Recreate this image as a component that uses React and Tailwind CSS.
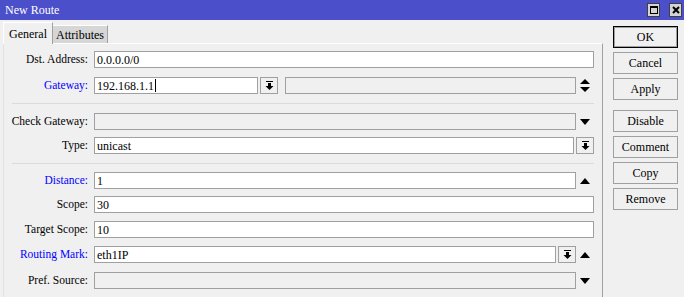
import React from "react";

const serif = { fontFamily: '"Liberation Serif", "Times New Roman", serif' };

function DropIcon() {
  return (
    <svg width="9" height="9" viewBox="0 0 9 9">
      <rect x="1" y="0" width="7" height="1" fill="#000" />
      <rect x="3" y="2" width="3" height="3" fill="#000" />
      <polygon points="0.5,5 8.5,5 4.5,9" fill="#000" />
    </svg>
  );
}

function Arrow({ dir }) {
  if (dir === "both") {
    return (
      <svg width="10" height="13" viewBox="0 0 10 13">
        <polygon points="5,0 10,5 0,5" fill="#000" />
        <polygon points="0,8 10,8 5,13" fill="#000" />
      </svg>
    );
  }
  return (
    <svg width="10" height="6" viewBox="0 0 10 6">
      {dir === "up" ? (
        <polygon points="5,0 10,6 0,6" fill="#000" />
      ) : (
        <polygon points="0,0 10,0 5,6" fill="#000" />
      )}
    </svg>
  );
}

function Field({ value, disabled, caret }) {
  return (
    <div
      className={`h-[17px] flex-1 border border-[#a0a0a0] flex items-center pl-[2px] text-[12px] leading-none text-black ${
        disabled ? "bg-[#f0f0f0]" : "bg-white"
      }`}
    >
      {value}
      {caret && <span className="inline-block w-[1px] h-[13px] bg-black ml-[1px]" />}
    </div>
  );
}

function DropBtn() {
  return (
    <div className="h-[17px] w-[18px] ml-[2px] border border-[#a0a0a0] bg-[#f0f0f0] flex items-center justify-center">
      <DropIcon />
    </div>
  );
}

function Row({ label, blue, mt, children }) {
  return (
    <div className={`flex items-center h-[17px] pr-[8px] ${mt}`}>
      <div
        className={`w-[84px] text-right text-[11.5px] leading-none ${blue ? "text-[#0000ff]" : "text-black"}`}
      >
        {label}
      </div>
      <div className="flex flex-1 items-center ml-[6px]">{children}</div>
    </div>
  );
}

function ArrowCol({ dir }) {
  return <div className="w-[18px] flex items-center justify-center">{dir && <Arrow dir={dir} />}</div>;
}

function SideButton({ label, primary, mt }) {
  return (
    <button
      className={`h-[22px] w-[65px] bg-[#f0f0f0] text-[12px] text-black leading-none ${mt} ${
        primary ? "border border-black shadow-[inset_0_0_0_1px_#a0a0a0]" : "border border-[#a0a0a0]"
      }`}
      style={serif}
    >
      {label}
    </button>
  );
}

export default function App() {
  return (
    <div className="w-[684px] h-[297px] bg-[#f0f0f0] overflow-hidden" style={serif}>
      {/* title bar */}
      <div className="h-[20px] bg-[#4b4fc9] flex items-center justify-between pl-[5px] pr-[2px]">
        <span className="text-white text-[12px] leading-none">New Route</span>
        <div className="flex items-center gap-[9px]">
          <div className="w-[13px] h-[14px] bg-[#d4d4d4] border border-[#404040] flex items-center justify-center">
            <div className="w-[8px] h-[8px] border border-black border-t-2" />
          </div>
          <div className="w-[13px] h-[14px] bg-[#d4d4d4] border border-[#404040] flex items-center justify-center">
            <svg width="8" height="8" viewBox="0 0 8 8">
              <path d="M1 1 L7 7 M7 1 L1 7" stroke="#000" strokeWidth="2" />
            </svg>
          </div>
        </div>
      </div>

      <div className="flex">
        {/* left tab panel */}
        <div className="ml-[3px] w-[600px]">
          <div className="flex items-end h-[23px] pt-[1px]">
            <div className="h-[22px] w-[50px] bg-[#f0f0f0] border-l border-t border-white border-r-[#a0a0a0] border-r flex items-center justify-center text-[12px] leading-none -mb-[1px] relative">
              General
            </div>
            <div className="h-[18px] w-[55px] bg-[#d6d6d6] border-t border-white border-r border-r-[#a0a0a0] flex items-center justify-center text-[12px] leading-none">
              Attributes
            </div>
          </div>
          <div className="h-[260px] border-t border-white border-l border-l-[#e2e2e2] border-r border-r-[#a0a0a0]">
            <Row label="Dst. Address:" mt="mt-[7px]">
              <Field value="0.0.0.0/0" />
            </Row>
            <Row label="Gateway:" blue mt="mt-[9px]">
              <div className="w-[164px] flex">
                <Field value="192.168.1.1" caret />
              </div>
              <DropBtn />
              <div className="flex-1 flex ml-[7px]">
                <Field disabled />
              </div>
              <ArrowCol dir="both" />
            </Row>
            <div className="mt-[9px] mx-[8px] border-t border-[#dadada]" />
            <Row label="Check Gateway:" mt="mt-[9px]">
              <Field disabled />
              <ArrowCol dir="down" />
            </Row>
            <Row label="Type:" mt="mt-[7px]">
              <Field value="unicast" />
              <DropBtn />
            </Row>
            <div className="mt-[9px] mx-[8px] border-t border-[#dadada]" />
            <Row label="Distance:" blue mt="mt-[8px]">
              <Field value="1" />
              <ArrowCol dir="up" />
            </Row>
            <Row label="Scope:" mt="mt-[7px]">
              <Field value="30" />
            </Row>
            <Row label="Target Scope:" mt="mt-[8px]">
              <Field value="10" />
            </Row>
            <Row label="Routing Mark:" blue mt="mt-[8px]">
              <Field value="eth1IP" />
              <DropBtn />
              <ArrowCol dir="up" />
            </Row>
            <Row label="Pref. Source:" mt="mt-[9px]">
              <Field disabled />
              <ArrowCol dir="down" />
            </Row>
          </div>
        </div>

        {/* right buttons */}
        <div className="ml-[10px] pt-[6px] flex flex-col">
          <SideButton label="OK" primary />
          <SideButton label="Cancel" mt="mt-[4px]" />
          <SideButton label="Apply" mt="mt-[4px]" />
          <SideButton label="Disable" mt="mt-[10px]" />
          <SideButton label="Comment" mt="mt-[4px]" />
          <SideButton label="Copy" mt="mt-[4px]" />
          <SideButton label="Remove" mt="mt-[4px]" />
        </div>
      </div>
    </div>
  );
}
